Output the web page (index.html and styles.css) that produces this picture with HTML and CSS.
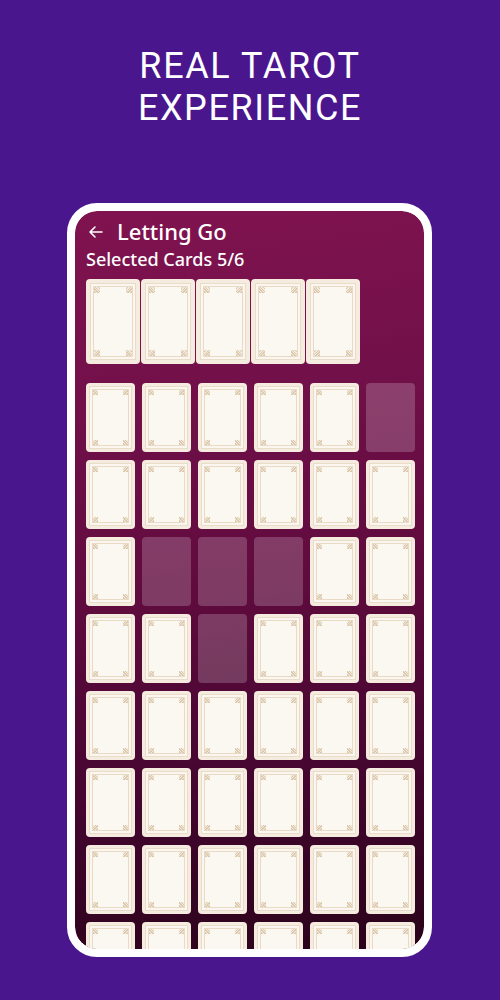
FILE: index.html
```html
<!DOCTYPE html>
<html>
<head>
<meta charset="utf-8">
<link rel="stylesheet" href="styles.css">
</head>
<body>
<h1 class="headline">REAL TAROT<br>EXPERIENCE</h1>
<div class="phone">
  <div class="screen">
    <div class="topbar">
      <svg class="back" width="18" height="18" viewBox="0 0 18 18"><path d="M16 9H4M9 4L4 9l5 5" fill="none" stroke="#fff" stroke-width="1.6" stroke-linecap="round" stroke-linejoin="round"/></svg>
      <span class="title">Letting Go</span>
    </div>
    <div class="subtitle">Selected Cards 5/6</div>
    <div class="selected">
      <div class="card big"><div class="face"></div></div>
      <div class="card big"><div class="face"></div></div>
      <div class="card big"><div class="face"></div></div>
      <div class="card big"><div class="face"></div></div>
      <div class="card big"><div class="face"></div></div>
    </div>
    <div class="deck">
      <div class="card"><div class="face"></div></div>
      <div class="card"><div class="face"></div></div>
      <div class="card"><div class="face"></div></div>
      <div class="card"><div class="face"></div></div>
      <div class="card"><div class="face"></div></div>
      <div class="slot"></div>

      <div class="card"><div class="face"></div></div>
      <div class="card"><div class="face"></div></div>
      <div class="card"><div class="face"></div></div>
      <div class="card"><div class="face"></div></div>
      <div class="card"><div class="face"></div></div>
      <div class="card"><div class="face"></div></div>

      <div class="card"><div class="face"></div></div>
      <div class="slot"></div>
      <div class="slot"></div>
      <div class="slot"></div>
      <div class="card"><div class="face"></div></div>
      <div class="card"><div class="face"></div></div>

      <div class="card"><div class="face"></div></div>
      <div class="card"><div class="face"></div></div>
      <div class="slot"></div>
      <div class="card"><div class="face"></div></div>
      <div class="card"><div class="face"></div></div>
      <div class="card"><div class="face"></div></div>

      <div class="card"><div class="face"></div></div>
      <div class="card"><div class="face"></div></div>
      <div class="card"><div class="face"></div></div>
      <div class="card"><div class="face"></div></div>
      <div class="card"><div class="face"></div></div>
      <div class="card"><div class="face"></div></div>

      <div class="card"><div class="face"></div></div>
      <div class="card"><div class="face"></div></div>
      <div class="card"><div class="face"></div></div>
      <div class="card"><div class="face"></div></div>
      <div class="card"><div class="face"></div></div>
      <div class="card"><div class="face"></div></div>

      <div class="card"><div class="face"></div></div>
      <div class="card"><div class="face"></div></div>
      <div class="card"><div class="face"></div></div>
      <div class="card"><div class="face"></div></div>
      <div class="card"><div class="face"></div></div>
      <div class="card"><div class="face"></div></div>

      <div class="card"><div class="face"></div></div>
      <div class="card"><div class="face"></div></div>
      <div class="card"><div class="face"></div></div>
      <div class="card"><div class="face"></div></div>
      <div class="card"><div class="face"></div></div>
      <div class="card"><div class="face"></div></div>
    </div>
  </div>
</div>
</body>
</html>
```
FILE: styles.css
```css
html, body {
  margin: 0;
  padding: 0;
}
body {
  width: 500px;
  height: 1000px;
  overflow: hidden;
  background: #4a168e;
  font-family: "Noto Sans", "Open Sans", sans-serif;
}
.headline {
  margin: 45px 0 0;
  font-family: Roboto, "Noto Sans", sans-serif;
  font-weight: 400;
  font-size: 36px;
  line-height: 42px;
  color: #fff;
  text-align: center;
  letter-spacing: 1.6px;
}
.phone {
  margin: 74px 0 0 67px;
  width: 365px;
  height: 754px;
  box-sizing: border-box;
  border: 8px solid #fff;
  border-radius: 30px;
  overflow: hidden;
  background: #fff;
}
.screen {
  height: 100%;
  border-radius: 22px;
  overflow: hidden;
  box-sizing: border-box;
  padding: 6px 8px 0 11px;
  background: linear-gradient(172deg, #80134f 0%, #72104a 25%, #600b3e 50%, #450630 75%, #2a0319 100%);
}
.topbar {
  display: flex;
  align-items: center;
  height: 29px;
  gap: 13px;
}
.back {
  display: block;
  margin-top: 1px;
}
.title {
  color: #fff;
  font-size: 22px;
  font-weight: 500;
  line-height: 29px;
}
.subtitle {
  margin-top: 2px;
  color: #fff;
  font-size: 18px;
  font-weight: 500;
  line-height: 23px;
}
.selected {
  margin-top: 8px;
  display: flex;
  gap: 1px;
}
.card {
  box-sizing: border-box;
  width: 49px;
  height: 69px;
  padding: 3px;
  border-radius: 4px;
  background: #f5ecdf;
}
.card.big {
  width: 54px;
  height: 85px;
  padding: 4px;
}
.face {
  box-sizing: border-box;
  height: 100%;
  border: 1px solid #e9dcc8;
  box-shadow: inset 0 0 0 2px #fbf7f0, inset 0 0 0 3px #e8dac4;
  background-color: #fbf7f1;
  background-image:
    repeating-linear-gradient(45deg, #dccab0 0 1px, #f3eadc 1px 2px),
    repeating-linear-gradient(-45deg, #dccab0 0 1px, #f3eadc 1px 2px),
    repeating-linear-gradient(-45deg, #dccab0 0 1px, #f3eadc 1px 2px),
    repeating-linear-gradient(45deg, #dccab0 0 1px, #f3eadc 1px 2px);
  background-size: 7px 7px;
  background-position: 1px 1px, calc(100% - 1px) 1px, 1px calc(100% - 1px), calc(100% - 1px) calc(100% - 1px);
  background-repeat: no-repeat;
}
.big .face {
  background-size: 8px 8px;
}
.deck {
  margin-top: 19px;
  display: grid;
  grid-template-columns: repeat(6, 49px);
  grid-auto-rows: 69px;
  column-gap: 7px;
  row-gap: 8px;
}
.slot {
  border-radius: 4px;
  background: rgba(255, 255, 255, 0.2);
}
```
